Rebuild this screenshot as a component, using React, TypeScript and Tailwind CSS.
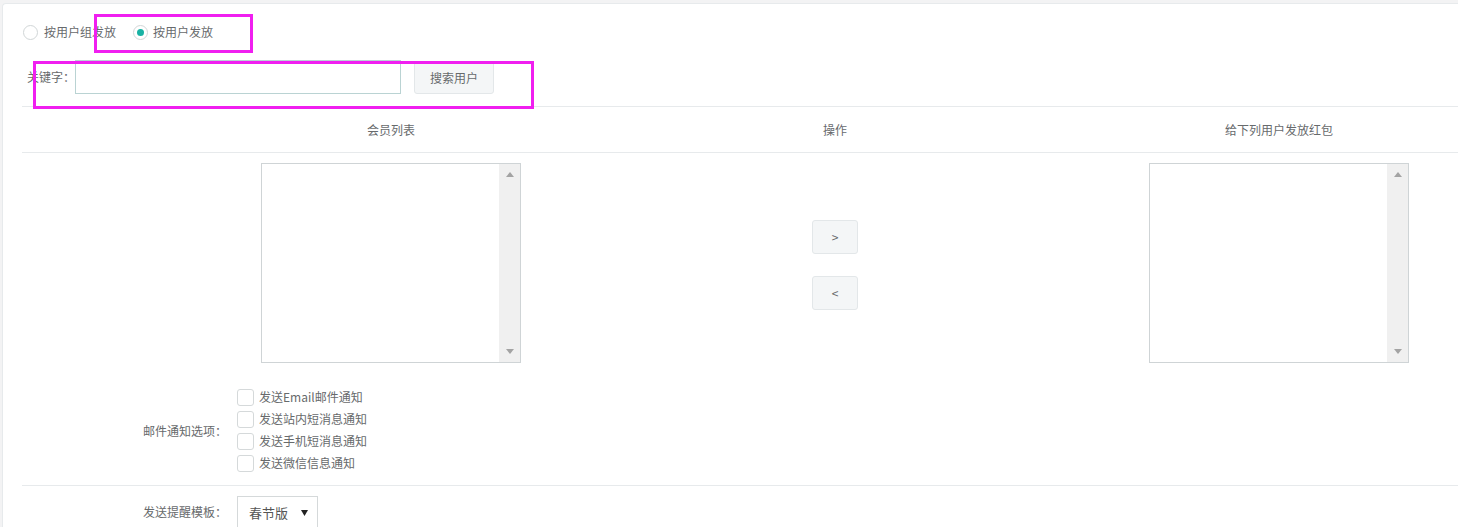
import React from "react";

const font = { fontFamily: '"Noto Sans CJK SC", "Liberation Sans", sans-serif' };

function ListBox() {
  return (
    <div className="flex h-[200px] w-[260px] border border-[#cfd4d6] bg-white">
      <div className="flex-1" />
      <div className="flex w-[21px] flex-col items-center justify-between bg-[#f0f0f0] py-[8px]">
        <svg width="8" height="5" viewBox="0 0 8 5"><path d="M4 0 L8 5 L0 5 Z" fill="#a3a3a3" /></svg>
        <svg width="8" height="5" viewBox="0 0 8 5"><path d="M0 0 L8 0 L4 5 Z" fill="#a3a3a3" /></svg>
      </div>
    </div>
  );
}

function Check({ label }: { label: string }) {
  return (
    <div className="flex h-[22px] items-center">
      <span className="h-[17px] w-[17px] rounded-[3px] border border-[#d5d9da] bg-white" />
      <span className="ml-[5px] text-[12px] text-[#676a6c]">{label}</span>
    </div>
  );
}

export default function App() {
  return (
    <div className="relative h-[527px] w-[1458px] overflow-hidden bg-[#f3f3f4] pl-[2px] pt-[3px]" style={font}>
      <div className="h-[600px] w-[1500px] rounded-tl-[4px] border-l border-t border-[#e7eaec] bg-white pl-[19px] text-[12px] text-[#676a6c]">
        {/* radio row */}
        <div className="flex h-[56px] items-center pl-[1px]">
          <span className="h-[15px] w-[15px] rounded-full border border-[#d1d6d7] bg-white" />
          <span className="ml-[6px]">按用户组发放</span>
          <span className="ml-[17px] flex h-[15px] w-[15px] items-center justify-center rounded-full border border-[#d1d6d7] bg-white">
            <span className="h-[7px] w-[7px] rounded-full bg-[#19b2a4]" />
          </span>
          <span className="ml-[5px]">按用户发放</span>
        </div>
        {/* keyword row */}
        <div className="flex h-[46px] items-start pl-[1px]">
          <span className="ml-[4px] mt-[8px]">关键字：</span>
          <div className="h-[34px] w-[326px] border border-[#bad3d3] bg-white" />
          <button className="ml-[13px] mt-[1px] h-[33px] w-[80px] rounded-[3px] border border-[#e3e7e9] bg-[#f4f6f7] text-[12px] text-[#676a6c]">搜索用户</button>
        </div>
        <div className="h-px w-full bg-[#e7eaec]" />
        {/* table header */}
        <div className="flex h-[45px] items-center pl-[1px]">
          <div className="w-[146px]" />
          <div className="w-[444px] text-center">会员列表</div>
          <div className="w-[444px] text-center">操作</div>
          <div className="w-[444px] text-center">给下列用户发放红包</div>
        </div>
        <div className="h-px w-full bg-[#e7eaec]" />
        {/* table body */}
        <div className="flex pl-[1px] pt-[10px]">
          <div className="w-[146px]" />
          <div className="flex w-[444px] justify-center"><ListBox /></div>
          <div className="flex w-[444px] flex-col items-center pt-[57px]">
            <button className="h-[34px] w-[46px] rounded-[3px] border border-[#e3e7e9] bg-[#f4f6f7] text-[12px] text-[#676a6c]">&gt;</button>
            <button className="mt-[22px] h-[34px] w-[46px] rounded-[3px] border border-[#e3e7e9] bg-[#f4f6f7] text-[12px] text-[#676a6c]">&lt;</button>
          </div>
          <div className="flex w-[444px] justify-center"><ListBox /></div>
        </div>
        {/* notify options */}
        <div className="flex pl-[1px] pt-[23px]">
          <div className="flex w-[204px] items-center justify-end pt-[2px]">邮件通知选项：</div>
          <div className="ml-[10px] flex flex-col">
            <Check label="发送Email邮件通知" />
            <Check label="发送站内短消息通知" />
            <Check label="发送手机短消息通知" />
            <Check label="发送微信信息通知" />
          </div>
        </div>
        <div className="mt-[11px] h-px w-full bg-[#e7eaec]" />
        <div className="flex items-start pl-[1px] pt-[10px]">
          <div className="flex h-[32px] w-[204px] items-center justify-end">发送提醒模板：</div>
          <div className="ml-[10px] flex h-[34px] w-[81px] items-center justify-between border border-[#d5d9da] bg-white pl-[11px] pr-[9px]">
            <span className="text-[13px] text-[#555]">春节版</span>
            <svg width="7" height="6" viewBox="0 0 7 6"><path d="M0 0 L7 0 L3.5 6 Z" fill="#222" /></svg>
          </div>
        </div>
      </div>
      {/* annotation boxes */}
      <div className="absolute left-[94px] top-[14px] h-[39px] w-[159px] border-[3px] border-[#f01ff0]" />
      <div className="absolute left-[33px] top-[61px] h-[48px] w-[501px] border-[3px] border-[#f01ff0]" />
    </div>
  );
}
